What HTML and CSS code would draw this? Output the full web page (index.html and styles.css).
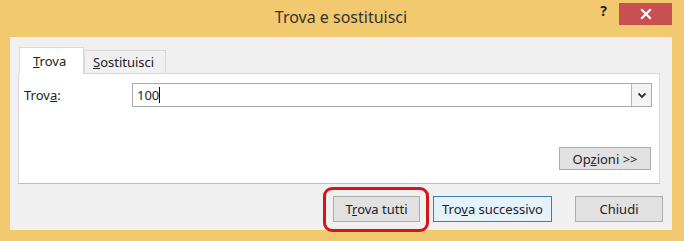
FILE: index.html
```html
<!DOCTYPE html>
<html lang="it">
<head>
    <meta charset="UTF-8">
    <title>Trova e sostituisci</title>
    <link rel="stylesheet" href="styles.css">
</head>
<body>

<div class="window">
    <div class="title-bar">
        <span class="title">Trova e sostituisci</span>
        <span class="help">?</span>
        <span class="close">
            <svg width="12" height="12" viewBox="0 0 12 12">
                <path d="M2 2 L10 10 M10 2 L2 10" stroke="#fff" stroke-width="2.2" stroke-linecap="square"/>
            </svg>
        </span>
    </div>

    <div class="dialog">
        <div class="tabs">
            <div class="tab active"><u>T</u>rova</div>
            <div class="tab"><u>S</u>ostituisci</div>
        </div>

        <div class="panel">
            <div class="field">
                <label>Trov<u>a</u>:</label>
                <div class="combo">
                    <span class="value">100<span class="caret"></span></span>
                    <span class="drop">
                        <svg width="10" height="7" viewBox="0 0 10 7">
                            <path d="M1.5 1.5 L5 5 L8.5 1.5" fill="none" stroke="#333" stroke-width="1.8"/>
                        </svg>
                    </span>
                </div>
            </div>
            <div class="options-row">
                <button class="btn options">Op<u>z</u>ioni &gt;&gt;</button>
            </div>
        </div>

        <div class="actions">
            <span class="highlight">
                <button class="btn">T<u>r</u>ova tutti</button>
            </span>
            <button class="btn default">Tro<u>v</u>a successivo</button>
            <button class="btn close-btn">Chiudi</button>
        </div>
    </div>
</div>

</body>
</html>
```

FILE: styles.css
```css
body, html {
    margin: 0;
    padding: 0;
    font-family: 'Noto Sans', 'Open Sans', sans-serif;
    background: #f2c96f;
    overflow: hidden;
}

.window {
    width: 684px;
    height: 241px;
    background: #f2c96f;
    box-sizing: border-box;
    padding: 0 12px 11px 10px;
}

.title-bar {
    height: 37px;
    display: flex;
    align-items: flex-start;
    position: relative;
}

.title {
    position: absolute;
    left: 0;
    right: 0;
    top: 6px;
    text-align: center;
    font-size: 16px;
    color: #333;
}

.help {
    margin-left: auto;
    margin-top: 1px;
    margin-right: 12px;
    font-size: 14px;
    font-weight: bold;
    color: #222;
}

.close {
    width: 53px;
    height: 22px;
    margin-top: 3px;
    background: #c75050;
    display: flex;
    align-items: center;
    justify-content: center;
}

.dialog {
    background: #f0f0f0;
    height: 193px;
    box-sizing: border-box;
    padding: 10px 12px 0 8px;
    font-size: 13px;
    color: #222;
}

.tabs {
    display: flex;
    align-items: flex-end;
    height: 26px;
    padding-left: 1px;
}

.tab {
    height: 23px;
    box-sizing: border-box;
    padding: 2px 8px 0 8px;
    border: 1px solid #d9d9d9;
    border-bottom: none;
    background: #f0f0f0;
    width: 82px;
}

.tab.active {
    height: 27px;
    width: 65px;
    background: #fff;
    padding: 4px 0 0 13px;
    border-color: #d9d9d9;
    margin-bottom: -1px;
    position: relative;
    z-index: 1;
}

.panel {
    background: #fff;
    border: 1px solid #d9d9d9;
    border-bottom-color: #bdbdbd;
    height: 111px;
    box-sizing: border-box;
    padding: 9px 7px 0 5px;
}

.field {
    display: flex;
    align-items: center;
}

.field label {
    width: 108px;
}

.combo {
    flex: 1;
    height: 24px;
    box-sizing: border-box;
    border: 1px solid #a9a9a9;
    display: flex;
    align-items: center;
    margin-right: 0;
}

.value {
    padding-left: 4px;
    flex: 1;
    display: flex;
    align-items: center;
}

.caret {
    display: inline-block;
    width: 1px;
    height: 16px;
    background: #000;
}

.drop {
    width: 19px;
    height: 22px;
    border-left: 1px solid #b5b5b5;
    background: #f4f4f4;
    display: flex;
    align-items: center;
    justify-content: center;
}

.options-row {
    display: flex;
    justify-content: flex-end;
    margin-top: 40px;
    padding-right: 1px;
}

.btn {
    font-family: 'Noto Sans', 'Open Sans', sans-serif;
    font-size: 13px;
    color: #222;
    height: 26px;
    padding: 0;
    border: 1px solid #adadad;
    background: #e1e1e1;
    border-radius: 0;
}

.options {
    width: 92px;
    height: 23px;
}

.actions {
    display: flex;
    justify-content: flex-end;
    align-items: center;
    margin-top: 12px;
    margin-right: -3px;
}

.actions .btn {
    width: 87px;
}

.actions .default {
    width: 119px;
    margin-left: 13px;
    border-color: #3c7fb1;
    background: #e5f1fb;
    box-shadow: inset 0 0 0 1px #e5f1fb;
}

.actions .close-btn {
    width: 88px;
    margin-left: 23px;
}

.highlight {
    position: relative;
    display: flex;
}

.highlight::after {
    content: "";
    position: absolute;
    left: -10px;
    right: -9px;
    top: -9px;
    bottom: -10px;
    border: 3px solid #d0151d;
    border-radius: 9px;
}
```
